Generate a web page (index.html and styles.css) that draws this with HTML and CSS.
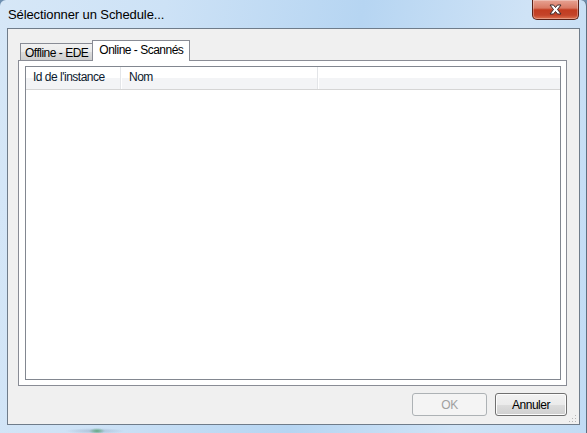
FILE: index.html
```html
<!DOCTYPE html>
<html lang="fr">
<head>
    <meta charset="UTF-8">
    <title>Sélectionner un Schedule...</title>
    <link rel="stylesheet" href="styles.css">
</head>
<body>
    <div class="window">
        <div class="title-bar">
            <span class="title">Sélectionner un Schedule...</span>
            <button class="close-button" aria-label="Fermer">
                <svg width="19" height="11" viewBox="0 0 19 11">
                    <path d="M4 1 L7.5 1 L9.5 3.5 L11.5 1 L15 1 L11.5 5.5 L15 10 L11.5 10 L9.5 7.5 L7.5 10 L4 10 L7.5 5.5 Z"
                          fill="#fff" stroke="#3b2a2a" stroke-width="1" stroke-linejoin="round"/>
                </svg>
            </button>
        </div>
        <div class="client">
            <div class="tabs">
                <div class="tab">Offline - EDE</div>
                <div class="tab active">Online - Scannés</div>
            </div>
            <div class="tab-panel">
                <div class="list-view">
                    <div class="list-header">
                        <div class="col col-id">Id de l'instance</div>
                        <div class="col col-name">Nom</div>
                        <div class="col col-rest"></div>
                    </div>
                    <div class="list-body"></div>
                </div>
            </div>
            <div class="dialog-buttons">
                <button class="button ok" disabled>OK</button>
                <button class="button cancel">Annuler</button>
            </div>
            <svg class="grip" width="10" height="10" viewBox="0 0 10 10">
                <rect x="7" y="1" width="1" height="1" fill="#b8b8b8"/>
                <rect x="4" y="4" width="1" height="1" fill="#b8b8b8"/>
                <rect x="7" y="4" width="1" height="1" fill="#b8b8b8"/>
                <rect x="1" y="7" width="1" height="1" fill="#b8b8b8"/>
                <rect x="4" y="7" width="1" height="1" fill="#b8b8b8"/>
                <rect x="7" y="7" width="1" height="1" fill="#b8b8b8"/>
            </svg>
        </div>
    </div>
</body>
</html>
```

FILE: styles.css
```css
/* Base */
body {
    margin: 0;
    font-family: "Liberation Sans", Arial, sans-serif;
    font-size: 12px;
    letter-spacing: -0.5px;
    color: #000;
    background: #6d8fb0;
}

/* Aero window frame */
.window {
    width: 587px;
    height: 433px;
    box-sizing: border-box;
    display: flex;
    flex-direction: column;
    border-radius: 6px 6px 0 0;
    border-right: 1px solid #5e6f80;
    background:
        radial-gradient(ellipse 8px 3px at 97px 431px, rgba(50,150,70,0.6), rgba(50,150,70,0) 100%),
        radial-gradient(ellipse 30px 3px at 95px 431px, rgba(90,110,140,0.3), rgba(90,110,140,0) 100%),
        linear-gradient(100deg, #d6e7f7 0%, #cde2f6 25%, #b6d5f2 55%, #cfe3f6 80%, #c1dbf4 100%);
}

.title-bar {
    height: 28px;
    display: flex;
    justify-content: space-between;
    align-items: flex-start;
    padding-left: 8px;
}

.title {
    margin-top: 7px;
    font-size: 13px;
    letter-spacing: -0.1px;
    color: #000;
}

.close-button {
    width: 47px;
    height: 20px;
    margin-right: 7px;
    padding: 0;
    border: 1px solid #5b2218;
    border-top: none;
    border-radius: 0 0 5px 5px;
    background: linear-gradient(#e7a393 0%, #d97a64 42%, #c23c20 52%, #c4442a 80%, #de7452 100%);
    box-shadow: inset 0 0 0 1px rgba(255,255,255,0.3);
    display: flex;
    align-items: center;
    justify-content: center;
}

/* Client area */
.client {
    position: relative;
    flex: 1;
    margin: 0 6px 8px 7px;
    border: 1px solid #6f7c8a;
    background: #f0f0f0;
    padding: 11px 12px 8px 10px;
    display: flex;
    flex-direction: column;
}

/* Tabs */
.tabs {
    display: flex;
    align-items: flex-end;
    height: 20px;
    padding-left: 2px;
    position: relative;
    z-index: 1;
}

.tab {
    height: 17px;
    box-sizing: border-box;
    padding: 2px 4px 0 4px;
    border: 1px solid #898c95;
    border-bottom: none;
    border-right: none;
    background: linear-gradient(#f2f2f2 0%, #ebebeb 50%, #dddddd 51%, #cfcfcf 100%);
    line-height: 14px;
}

.tab.active {
    height: 21px;
    margin-bottom: -1px;
    padding: 2px 6px 0 6px;
    border-right: 1px solid #898c95;
    background: #fff;
}

.tab-panel {
    height: 326px;
    box-sizing: border-box;
    border: 1px solid #898c95;
    background: #fff;
    padding: 5px 5px 5px 6px;
    display: flex;
}

/* List view */
.list-view {
    flex: 1;
    border: 1px solid #828790;
    display: flex;
    flex-direction: column;
    background: #fff;
}

.list-header {
    height: 23px;
    box-sizing: border-box;
    display: flex;
    border-bottom: 1px solid #d5d5d5;
    background: linear-gradient(#ffffff 0%, #ffffff 50%, #f3f4f6 50%, #f3f4f6 100%);
}

.col {
    box-sizing: border-box;
    line-height: 21px;
    padding-left: 7px;
    color: #0c1a2e;
    border-right: 1px solid #e3e5e8;
    box-shadow: 1px 0 0 #fff;
}

.col-id {
    width: 95px;
}

.col-name {
    width: 197px;
    padding-left: 8px;
}

.col-rest {
    flex: 1;
    border-right: none;
    box-shadow: none;
}

.list-body {
    flex: 1;
}

/* Buttons */
.dialog-buttons {
    display: flex;
    justify-content: flex-end;
    gap: 8px;
    margin-top: 7px;
}

.button {
    height: 23px;
    padding: 0;
    font-family: inherit;
    font-size: 12px;
    letter-spacing: -0.5px;
    color: #000;
    border: 1px solid #707070;
    border-radius: 3px;
    background: linear-gradient(#f2f2f2 0%, #ebebeb 50%, #dddddd 51%, #cfcfcf 100%);
    box-shadow: inset 0 0 0 1px #fcfcfc;
}

.button.ok {
    width: 75px;
}

.button.cancel {
    width: 72px;
}

.button:disabled {
    color: #a0a0a0;
    border-color: #adb2b5;
    background: #f4f4f4;
    box-shadow: none;
}

.grip {
    position: absolute;
    right: 1px;
    bottom: 0;
}
```
